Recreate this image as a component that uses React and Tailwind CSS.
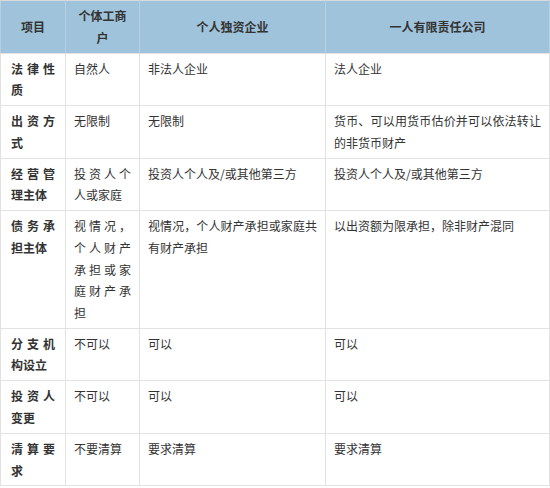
const HEAD = ['项目', '个体工商户', '个人独资企业', '一人有限责任公司'];

const ROWS = [
  ['法律性质', '自然人', '非法人企业', '法人企业'],
  ['出资方式', '无限制', '无限制', '货币、可以用货币估价并可以依法转让的非货币财产'],
  ['经营管理主体', '投资人个人或家庭', '投资人个人及/或其他第三方', '投资人个人及/或其他第三方'],
  ['债务承担主体', '视情况，个人财产承担或家庭财产承担', '视情况，个人财产承担或家庭共有财产承担', '以出资额为限承担，除非财产混同'],
  ['分支机构设立', '不可以', '可以', '可以'],
  ['投资人变更', '不可以', '可以', '可以'],
  ['清算要求', '不要清算', '要求清算', '要求清算'],
];

// first column gets a bit more side padding so it breaks after 3 chars
const PAD = ['px-[10px]', 'px-2', 'px-2', 'px-2'];

export default function App() {
  return (
    <div className="w-[550px] h-[488px] bg-white text-[#333] font-['Noto_Sans_CJK_SC','Noto_Sans',sans-serif]">
      <table className="w-[549px] table-fixed border-collapse text-[12px] leading-[21.6px]">
        <colgroup>
          <col className="w-[65px]" />
          <col className="w-[74px]" />
          <col className="w-[186px]" />
          <col className="w-[224px]" />
        </colgroup>
        <thead>
          <tr className="bg-[#9fc3db]">
            {HEAD.map((h, i) => (
              <th
                key={h}
                className={`${PAD[i]} py-[4.2px] font-bold text-center align-middle border border-[#b6d0e1] border-t-[#dadada] border-b-[#e2e2e2]`}
              >
                {h}
              </th>
            ))}
          </tr>
        </thead>
        <tbody>
          {ROWS.map((row) => (
            <tr key={row[0]}>
              {row.map((cell, i) => (
                <td
                  key={i}
                  className={`${PAD[i]} py-[4.2px] align-top text-justify border border-[#e2e2e2] ${i === 0 ? 'font-bold' : ''}`}
                >
                  {cell}
                </td>
              ))}
            </tr>
          ))}
        </tbody>
      </table>
    </div>
  );
}
